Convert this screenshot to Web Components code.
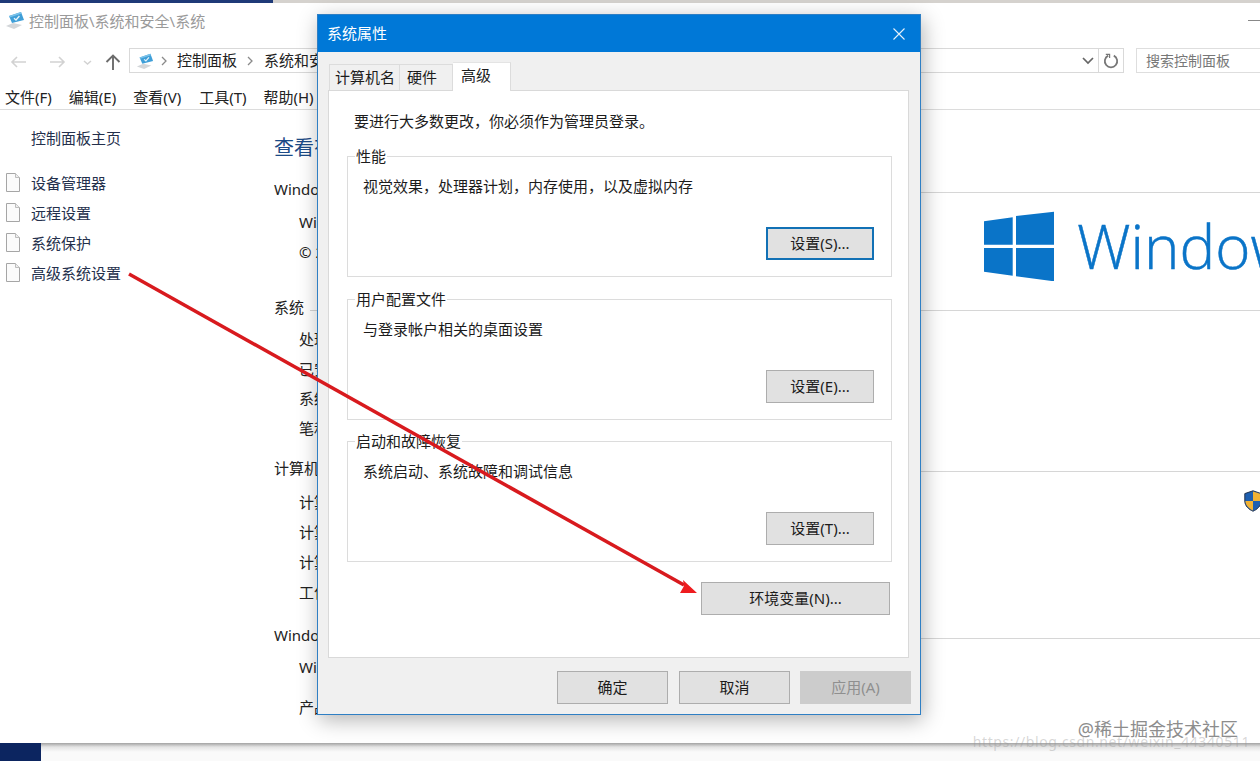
<!DOCTYPE html>
<html lang="zh-CN">
<head>
<meta charset="utf-8">
<title>系统属性</title>
<style>
  html, body { margin: 0; height: 100%; overflow: hidden; background: #fff; }
  body { font: 15px "Noto Sans", "Noto Sans CJK SC", sans-serif; color: #1c1c1c; }
</style>
</head>
<body>
<win-desktop>
  <cp-explorer></cp-explorer>
  <sys-dialog slot="over"></sys-dialog>
  <red-arrow slot="over"></red-arrow>
  <water-mark slot="over"></water-mark>
</win-desktop>

<script>
const PC_ICON = `
  <svg width="20" height="20" viewBox="0 0 20 20">
    <path d="M1 16 L8 13 L17 15 L9 19 Z" fill="#d3d6d9"/>
    <path d="M4 6 L16 2 L19 10 L7 13 Z" fill="#3f9fd8"/>
    <path d="M4 6 L16 2 L16.6 3.6 L4.6 7.6 Z" fill="#7cc3ea"/>
    <path d="M9 8.2 L11 10 L14.4 6" fill="none" stroke="#e6f4fb" stroke-width="1.3"/>
  </svg>`;

class WinDesktop extends HTMLElement {
  constructor() {
    super();
    this.attachShadow({mode: 'open'}).innerHTML = `
      <style>
        :host { display: flex; flex-direction: column; position: relative; width: 1260px; height: 761px; overflow: hidden; }
        .top { display: flex; height: 3px; flex: none; background: #d5d2ce; }
        .top i { width: 273px; background: #1f3a78; }
        .main { flex: 1; min-height: 0; overflow: hidden; background: #fff; }
        .bottom { display: flex; height: 18px; flex: none; background: linear-gradient(#a3a3a3, #e4e4e4 4px, #fafafa 9px); }
        .bottom i { width: 41px; background: #0c2560; }
      </style>
      <div class="top"><i></i></div>
      <div class="main"><slot></slot></div>
      <div class="bottom"><i></i></div>
      <slot name="over"></slot>`;
  }
}

class CpExplorer extends HTMLElement {
  constructor() {
    super();
    this.attachShadow({mode: 'open'}).innerHTML = `
      <style>
        :host { display: block; height: 100%; }
        .title { display: flex; align-items: center; gap: 4px; height: 34px; padding: 0 0 11px 5px; color: #9a9a9a; }
        .title .min { margin-left: auto; width: 12px; height: 1px; background: #888; }
        .nav { display: flex; height: 25px; }
        .arrows { width: 129px; flex: none; }
        .addr { flex: 1; display: flex; align-items: center; border: 1px solid #d9d9d9; box-sizing: border-box; padding-left: 6px; color: #222; white-space: nowrap; overflow: hidden; }
        .addr .crumb { margin: 0 10px 0 7px; flex: none; }
        .addr .crumb2 { margin: 0 11px 0 10px; flex: none; }
        .addr span { display: inline-block; padding-bottom: 2px; }
        .addr .sp { flex: 1; }
        .addr .end { display: flex; align-items: center; justify-content: center; width: 24px; height: 100%; border-left: 1px solid #d9d9d9; flex: none; }
        .addr .drop { margin-right: 4px; }
        .search { width: 124px; flex: none; margin-left: 12px; box-sizing: border-box; border: 1px solid #dedede; border-right: 0; padding-left: 9px; line-height: 23px; font-size: 14px; color: #777; }
        .menu { display: flex; gap: 17px; height: 36px; padding: 0 0 0 5px; border-bottom: 1px solid #dcdcdc; line-height: 48px; font-size: 15px; color: #222; }
        .body { display: flex; }
        .side { width: 274px; flex: none; padding-top: 14px; color: #24304c; font-size: 15px; }
        .side .home { height: 30px; line-height: 28px; padding-left: 31px; margin-bottom: 13px; }
        .content { flex: 1; min-width: 0; padding-top: 23px; }
        h1 { margin: 0 0 13px; font-size: 20px; line-height: 30px; font-weight: 400; color: #1b4a86; white-space: nowrap; }
        .shield { display: block; margin-right: -2px; }
        .logo { display: flex; align-items: center; height: 78px; gap: 23px; padding-left: 710px; color: #0a74c8; font: 300 60px/1 "Open Sans", sans-serif; -webkit-text-stroke: .5px #0a74c8; white-space: nowrap; overflow: hidden; }
        .logo svg { flex: none; }
      </style>
      <div class="title">${PC_ICON}<span>控制面板\\系统和安全\\系统</span><i class="min"></i></div>
      <div class="nav">
        <div class="arrows">
          <svg width="129" height="25" viewBox="0 0 129 25">
            <path d="M26 14 H12 M17 9 L12 14 L17 19" fill="none" stroke="#d2d2d2" stroke-width="1.6"/>
            <path d="M50 14 H64 M59 9 L64 14 L59 19" fill="none" stroke="#d2d2d2" stroke-width="1.6"/>
            <path d="M84 13 L87.5 16 L91 13" fill="none" stroke="#d2d2d2" stroke-width="1.5"/>
            <path d="M113 22 V8 M106.5 14 L113 7.5 L119.5 14" fill="none" stroke="#6c6c6c" stroke-width="1.9"/>
          </svg>
        </div>
        <div class="addr">
          ${PC_ICON.replace('width="20" height="20"', 'width="18" height="18"')}
          <svg class="crumb" width="6" height="10" viewBox="0 0 6 10"><path d="M1 1 L5 5 L1 9" fill="none" stroke="#8a8a8a" stroke-width="1.3"/></svg>
          <span>控制面板</span>
          <svg class="crumb2" width="6" height="10" viewBox="0 0 6 10"><path d="M1 1 L5 5 L1 9" fill="none" stroke="#8a8a8a" stroke-width="1.3"/></svg>
          <span>系统和安全</span>
          <span class="sp"></span>
          <svg class="drop" width="12" height="8" viewBox="0 0 12 8"><path d="M1 1 L6 6 L11 1" fill="none" stroke="#666" stroke-width="1.7"/></svg>
          <div class="end"><svg width="16" height="16" viewBox="0 0 16 16"><path d="M5.2 2.6 A6.2 6.2 0 1 0 10.8 2.6" fill="none" stroke="#777" stroke-width="1.8"/><path d="M2.8 1.4 H6.6 V5" fill="none" stroke="#777" stroke-width="1.2"/></svg></div>
        </div>
        <div class="search">搜索控制面板</div>
      </div>
      <div class="menu"><span>文件(F)</span><span>编辑(E)</span><span>查看(V)</span><span style="margin-left:1px">工具(T)</span><span>帮助(H)</span></div>
      <div class="body">
        <div class="side">
          <div class="home">控制面板主页</div>
          <cp-link>设备管理器</cp-link>
          <cp-link>远程设置</cp-link>
          <cp-link>系统保护</cp-link>
          <cp-link>高级系统设置</cp-link>
        </div>
        <div class="content">
          <h1>查看有关计算机的基本信息</h1>
          <cp-section label="Windows 版本">
            <cp-row style="margin-top:1px">Windows 10 专业版</cp-row>
            <cp-row>© 2019 Microsoft Corporation。</cp-row>
            <div class="logo" slot="aside">
              <svg width="70" height="70" viewBox="984 212 70 70"><path fill="#0a74c8" d="M984 222.3 L1012.7 218.3 V245.7 H984 Z M1016 217 L1054 212.7 V245.7 H1016 Z M984 249 H1012.7 V276.7 L984 272.7 Z M1016 249 H1054 V282.3 L1016 277.3 Z"/></svg>
              <span>Windows 10</span>
            </div>
          </cp-section>
          <cp-section label="系统" style="margin-top:28px">
            <cp-row style="margin-top:-1px">处理器</cp-row>
            <cp-row>已安装的内存(RAM)</cp-row>
            <cp-row>系统类型</cp-row>
            <cp-row>笔和触控</cp-row>
          </cp-section>
          <cp-section label="计算机名、域和工作组设置" style="margin-top:13px;--row:30px">
            <cp-row style="margin-top:1px">计算机名
              <svg class="shield" slot="end" width="18" height="22" viewBox="0 0 18 22">
                <path d="M9 .8 L17.2 3.6 V11 C17.2 16 13 19.6 9 21.2 C5 19.6 .8 16 .8 11 V3.6 Z" fill="#1e5fb0" stroke="#24344f" stroke-width="1"/>
                <path d="M9 1.4 L16.6 4 V11 H9 Z M9 11 V20.4 C5.6 19 1.6 15.6 1.4 11 Z" fill="#f2b233"/>
              </svg>
            </cp-row>
            <cp-row>计算机全名</cp-row>
            <cp-row>计算机描述</cp-row>
            <cp-row>工作组</cp-row>
          </cp-section>
          <cp-section label="Windows 激活" style="margin-top:16px;--row:30px">
            <cp-row style="margin-top:-2px">Windows 已激活</cp-row>
            <cp-row style="margin-top:10px">产品 ID</cp-row>
          </cp-section>
        </div>
      </div>`;
  }
}

class CpLink extends HTMLElement {
  constructor() {
    super();
    this.attachShadow({mode: 'open'}).innerHTML = `
      <style>
        :host { display: flex; align-items: center; gap: 11px; height: 30px; padding-left: 6px; }
      </style>
      <svg width="14" height="19" viewBox="0 0 14 19">
        <path d="M.5 .5 H9.5 L13.5 4.5 V18.5 H.5 Z" fill="#fbfbfb" stroke="#a6a6a6"/>
        <path d="M9.5 .5 V4.5 H13.5" fill="#eee" stroke="#bdbdbd"/>
      </svg>
      <span><slot></slot></span>`;
  }
}

class CpSection extends HTMLElement {
  constructor() {
    super();
    const root = this.attachShadow({mode: 'open'});
    root.innerHTML = `
      <style>
        :host { display: block; font-size: 15px; color: #222; }
        .head { display: flex; align-items: center; gap: 6px; height: 24px; margin-bottom: 7px; white-space: nowrap; }
        .head i { flex: 1; height: 1px; margin-top: 8px; background: #d6d6d6; }
        .wrap { position: relative; }
        .aside { position: absolute; left: 0; right: 0; top: 0; }
      </style>
      <div class="head"><span></span><i></i></div>
      <div class="wrap"><slot></slot><div class="aside"><slot name="aside"></slot></div></div>`;
    root.querySelector('span').textContent = this.getAttribute('label');
  }
}

class CpRow extends HTMLElement {
  constructor() {
    super();
    this.attachShadow({mode: 'open'}).innerHTML = `
      <style>
        :host { display: flex; align-items: center; justify-content: space-between; height: var(--row, 29.5px); padding-left: 25px; white-space: nowrap; }
      </style>
      <span><slot></slot></span><slot name="end"></slot>`;
  }
}

class SysDialog extends HTMLElement {
  constructor() {
    super();
    this.attachShadow({mode: 'open'}).innerHTML = `
      <style>
        :host { display: flex; flex-direction: column; position: absolute; left: 317px; top: 14px; width: 604px; height: 701px; box-sizing: border-box; border: 1px solid #2f7fc4; background: #f0f0f0; box-shadow: 2px 5px 20px rgba(0,0,0,.3); font-size: 15px; color: #1c1c1c; }
        .bar { display: flex; align-items: center; justify-content: space-between; height: 37px; flex: none; padding: 0 15px 0 9px; background: #0078d7; color: #fff; }
        .bar span { padding-bottom: 2px; }
        .tabs { display: flex; align-items: flex-end; height: 38px; flex: none; padding-left: 11px; position: relative; z-index: 1; }
        .tab { box-sizing: border-box; height: 26px; line-height: 24px; padding-left: 7px; border: 1px solid #dcdcdc; border-bottom: 0; border-left-width: 0; background: #f0f0f0; }
        .tab:first-child { border-left-width: 1px; padding-left: 5px; }
        .tab.on { height: 29px; margin-bottom: -1px; background: #fff; line-height: 24px; padding-left: 8px; border-top-color: #e4e4e4; }
        .panel { box-sizing: border-box; width: 581px; height: 568px; margin-left: 10px; flex: none; padding: 0 0 0 18px; background: #fff; border: 1px solid #d9d9d9; }
        .lead { line-height: 20px; padding: 20px 0 15px 7px; }
        group-box + group-box { margin-top: 12px; }
        group-box:last-of-type { margin-top: 11px; }
        .env { display: flex; justify-content: flex-end; width: 543px; margin-top: 20px; }
        .env win-button { width: 189px; }
        group-box win-button { width: 108px; }
        .foot { display: flex; justify-content: flex-end; gap: 11px; padding: 13px 9px 0 0; }
        .foot win-button { width: 111px; }
        .foot win-button:last-child { margin-left: -1px; }
      </style>
      <div class="bar"><span>系统属性</span>
        <svg width="12" height="12" viewBox="0 0 12 12"><path d="M.5 .5 L11.5 11.5 M11.5 .5 L.5 11.5" stroke="#fff" stroke-width="1.1" opacity=".9"/></svg>
      </div>
      <div class="tabs">
        <div class="tab" style="width:71px">计算机名</div>
        <div class="tab" style="width:53px">硬件</div>
        <div class="tab on" style="width:58px">高级</div>
      </div>
      <div class="panel">
        <div class="lead">要进行大多数更改，你必须作为管理员登录。</div>
        <group-box label="性能">
          视觉效果，处理器计划，内存使用，以及虚拟内存
          <win-button slot="action" focused>设置(S)...</win-button>
        </group-box>
        <group-box label="用户配置文件">
          与登录帐户相关的桌面设置
          <win-button slot="action">设置(E)...</win-button>
        </group-box>
        <group-box label="启动和故障恢复">
          系统启动、系统故障和调试信息
          <win-button slot="action">设置(T)...</win-button>
        </group-box>
        <div class="env"><win-button>环境变量(N)...</win-button></div>
      </div>
      <div class="foot">
        <win-button>确定</win-button>
        <win-button>取消</win-button>
        <win-button disabled>应用(A)</win-button>
      </div>`;
  }
}

class GroupBox extends HTMLElement {
  constructor() {
    super();
    const root = this.attachShadow({mode: 'open'});
    root.innerHTML = `
      <style>
        :host { display: block; width: 545px; }
        fieldset { box-sizing: border-box; height: 131px; margin: 0; padding: 10px 17px 16px 15px; border: 1px solid #dcdcdc; }
        legend { margin-left: -8px; padding: 0 1px; line-height: 20px; height: 20px; }
        .desc { line-height: 20px; height: 20px; }
        .act { display: flex; justify-content: flex-end; margin-top: 31px; }
      </style>
      <fieldset>
        <legend></legend>
        <div class="desc"><slot></slot></div>
        <div class="act"><slot name="action"></slot></div>
      </fieldset>`;
    root.querySelector('legend').textContent = this.getAttribute('label');
  }
}

class WinButton extends HTMLElement {
  constructor() {
    super();
    this.attachShadow({mode: 'open'}).innerHTML = `
      <style>
        :host { display: flex; align-items: center; justify-content: center; box-sizing: border-box; height: 33px; padding-bottom: 2px; background: #e1e1e1; border: 1px solid #adadad; color: #1c1c1c; white-space: nowrap; }
        :host([focused]) { border: 2px solid #1271b5; }
        :host([disabled]) { background: #cccccc; border-color: #cccccc; color: #8f8f8f; }
      </style>
      <slot></slot>`;
  }
}

class RedArrow extends HTMLElement {
  constructor() {
    super();
    this.attachShadow({mode: 'open'}).innerHTML = `
      <style>
        :host { display: block; position: absolute; left: 0; top: 0; width: 1260px; height: 761px; pointer-events: none; }
        svg { display: block; }
      </style>
      <svg width="1260" height="761" viewBox="0 0 1260 761">
        <path d="M129 274 L684 585" stroke="#d81a1e" stroke-width="3.5" fill="none"/>
        <path d="M697 593 L680 593 L684 586 L683 580 Z" fill="#ee1c1f"/>
      </svg>`;
  }
}

class WaterMark extends HTMLElement {
  constructor() {
    super();
    this.attachShadow({mode: 'open'}).innerHTML = `
      <style>
        :host { display: block; position: absolute; right: 10px; top: 719px; text-align: right; white-space: nowrap; pointer-events: none; }
        .a { font-size: 18px; line-height: 20px; color: #8d8d8d; margin-right: 12px; }
        .b { font: 14px/14px "Noto Sans", sans-serif; letter-spacing: .6px; color: rgba(150,150,150,.38); margin-top: -4px; }
      </style>
      <div class="a">@稀土掘金技术社区</div>
      <div class="b">https://blog.csdn.net/weixin_44340511</div>`;
  }
}

customElements.define('win-desktop', WinDesktop);
customElements.define('cp-explorer', CpExplorer);
customElements.define('cp-link', CpLink);
customElements.define('cp-section', CpSection);
customElements.define('cp-row', CpRow);
customElements.define('sys-dialog', SysDialog);
customElements.define('group-box', GroupBox);
customElements.define('win-button', WinButton);
customElements.define('red-arrow', RedArrow);
customElements.define('water-mark', WaterMark);
</script>
</body>
</html>
